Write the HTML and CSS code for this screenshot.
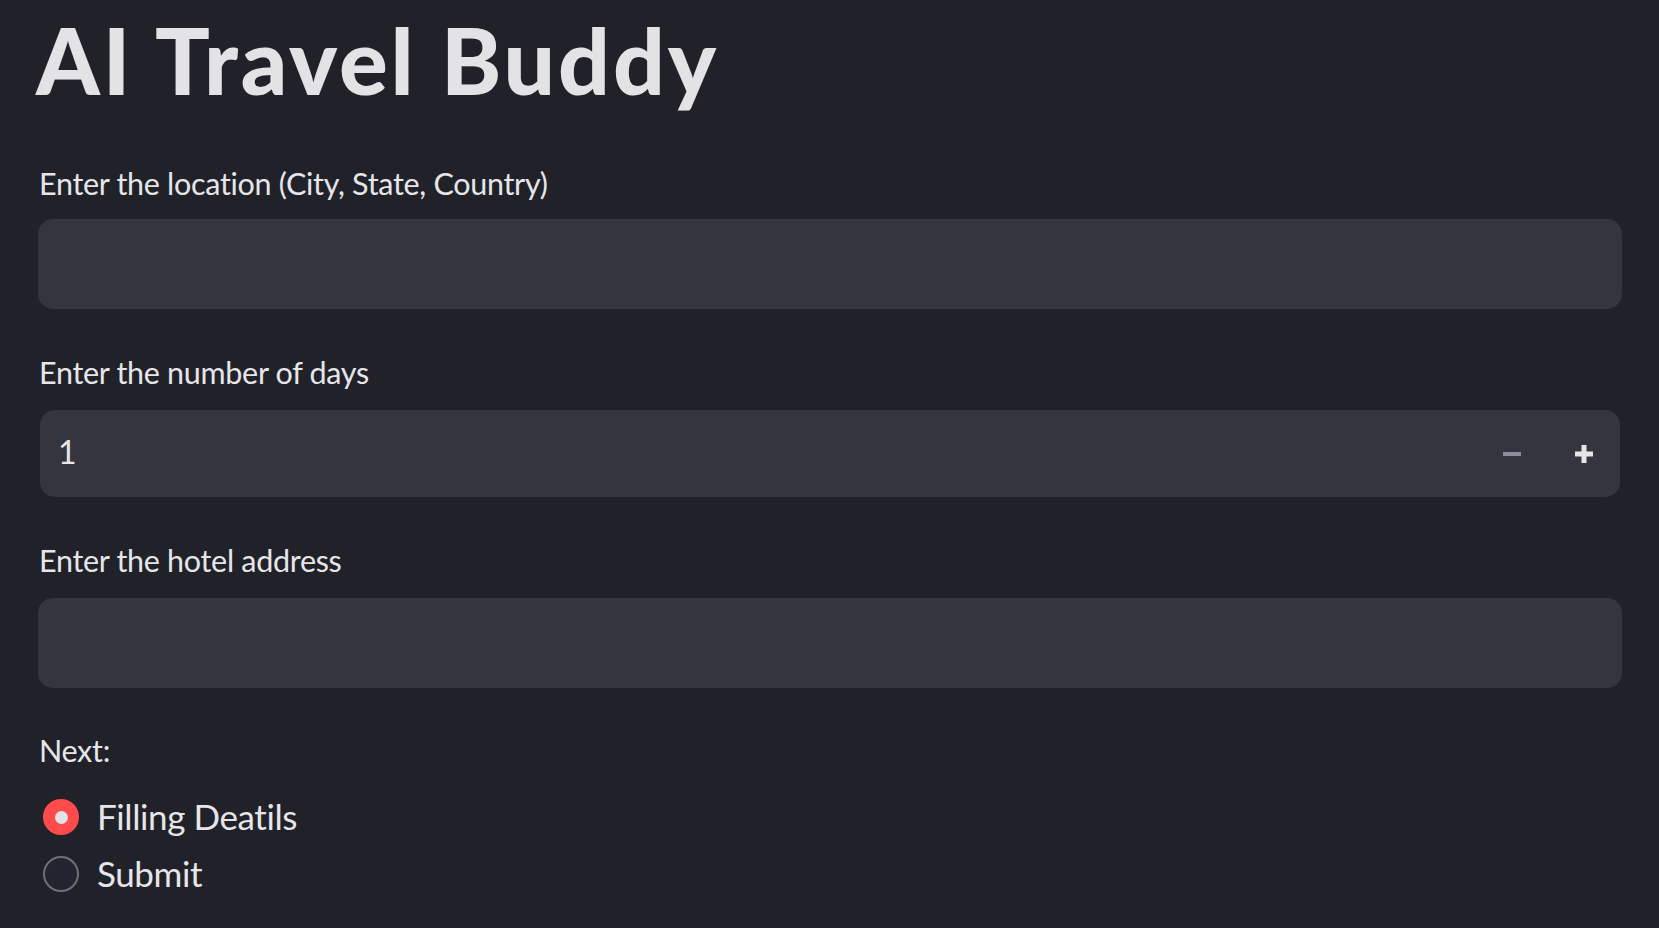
FILE: index.html
```html
<!DOCTYPE html>
<html lang="en">
<head>
<meta charset="utf-8">
<title>AI Travel Buddy</title>
<link rel="stylesheet" href="styles.css">
</head>
<body>
<main class="app">
  <h1 class="title">AI Travel Buddy</h1>

  <div class="field field-first">
    <label class="label">Enter the location (City, State, Country)</label>
    <div class="input"></div>
  </div>

  <div class="field">
    <label class="label">Enter the number of days</label>
    <div class="input number">
      <span class="num-value">1</span>
      <div class="steppers">
        <span class="step step-minus">
          <svg width="18" height="4" viewBox="0 0 18 4"><rect x="0" y="0" width="18" height="4" fill="#8b8e9f"/></svg>
        </span>
        <span class="step step-plus">
          <svg width="18" height="18" viewBox="0 0 18 18"><rect x="0" y="6.5" width="18" height="5" fill="#e6e6e8"/><rect x="6.5" y="0" width="5" height="18" fill="#e6e6e8"/></svg>
        </span>
      </div>
    </div>
  </div>

  <div class="field">
    <label class="label">Enter the hotel address</label>
    <div class="input"></div>
  </div>

  <div class="field field-last">
    <div class="label">Next:</div>
    <div class="radios">
      <div class="radio-row">
        <span class="radio checked"><span class="dot"></span></span>
        <span class="radio-label">Filling Deatils</span>
      </div>
      <div class="radio-row">
        <span class="radio"></span>
        <span class="radio-label">Submit</span>
      </div>
    </div>
  </div>
</main>
</body>
</html>
```

FILE: styles.css
```css
html, body {
  margin: 0;
  padding: 0;
  background: #212229;
}
body {
  font-family: Lato, "Open Sans", sans-serif;
  font-variant-ligatures: none;
  color: #e6e6ea;
}
.app {
  padding: 6px 37px 0 38px;
  display: flex;
  flex-direction: column;
}
.title {
  margin: 0;
  font-size: 91px;
  line-height: 108px;
  font-weight: 900;
  color: #e3e3e5;
  letter-spacing: 2.9px;
  margin-left: -2px;
}
.field {
  display: flex;
  flex-direction: column;
  margin-top: 45px;
}
.field-first {
  margin-top: 51px;
}
.field-last {
  margin-top: 44px;
}
.label {
  font-size: 30.5px;
  line-height: 36px;
  letter-spacing: -0.3px;
  margin-left: 1px;
}
.input {
  margin-top: 18px;
  height: 90px;
  background: #35353f;
  border-radius: 15px;
}
.field + .field .input {
  margin-top: 20px;
}
.input.number {
  height: 87px;
  margin-top: 19px;
  margin-left: 2px;
  margin-right: 2px;
  display: flex;
  align-items: center;
  justify-content: space-between;
}
.num-value {
  font-size: 32px;
  line-height: 1.2;
  padding-left: 18px;
  margin-top: -2px;
}
.steppers {
  display: flex;
  align-items: center;
  height: 100%;
  padding-right: 27px;
}
.step {
  display: flex;
  align-items: center;
  justify-content: center;
  height: 100%;
}
.step-minus {
  width: 18px;
  margin-right: 54px;
  padding-top: 1px;
}
.step-plus {
  width: 18px;
}
.radios {
  display: flex;
  flex-direction: column;
  gap: 1px;
  margin-top: 21px;
}
.radio-row {
  height: 56px;
  display: flex;
  align-items: center;
  gap: 18px;
  margin-left: 5px;
}
.radio {
  width: 36px;
  height: 36px;
  box-sizing: border-box;
  border-radius: 50%;
  border: 2.5px solid #6f7076;
  background: #222530;
  display: flex;
  align-items: center;
  justify-content: center;
  flex: none;
}
.radio.checked {
  border: none;
  background: #ff4b4b;
}
.dot {
  width: 13px;
  height: 13px;
  border-radius: 50%;
  background: #dfe2e7;
}
.radio-label {
  font-size: 35px;
  line-height: 56px;
  letter-spacing: -0.4px;
  margin-top: -3px;
}
```
